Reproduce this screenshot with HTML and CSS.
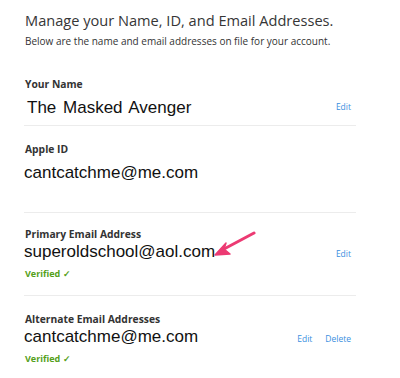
FILE: index.html
```html
<!DOCTYPE html>
<html>
<head>
<meta charset="utf-8">
<link rel="stylesheet" href="styles.css">
</head>
<body>
<div class="page">
  <header class="intro">
    <h1 class="title">Manage your Name, ID, and Email Addresses.</h1>
    <p class="subtitle">Below are the name and email addresses on file for your account.</p>
  </header>

  <section class="field field-name">
    <div class="label">Your Name</div>
    <div class="row">
      <span class="value value-name">The Masked Avenger</span>
      <span class="actions actions-centered"><a class="link">Edit</a></span>
    </div>
  </section>

  <section class="field field-id">
    <div class="label">Apple ID</div>
    <div class="row">
      <span class="value">cantcatchme@me.com</span>
    </div>
  </section>

  <section class="field field-email">
    <div class="label">Primary Email Address</div>
    <div class="row">
      <span class="value">superoldschool@aol.com</span>
      <span class="actions"><a class="link">Edit</a></span>
    </div>
    <div class="verified">Verified ✓</div>
    <svg class="arrow" width="50" height="34" viewBox="0 0 50 34">
      <path d="M44 2 L14 18" stroke="#ec3a73" stroke-width="3" stroke-linecap="round" fill="none"/>
      <path d="M5 24 L16 12 L14 18 L20 23 Z" fill="#ec3a73" stroke="#ec3a73" stroke-width="1.5" stroke-linejoin="round"/>
    </svg>
  </section>

  <section class="field field-email field-last">
    <div class="label">Alternate Email Addresses</div>
    <div class="row">
      <span class="value">cantcatchme@me.com</span>
      <span class="actions"><a class="link">Edit</a><a class="link">Delete</a></span>
    </div>
    <div class="verified verified-last">Verified ✓</div>
  </section>
</div>
</body>
</html>
```

FILE: styles.css
```css
html, body {
  margin: 0;
  padding: 0;
  background: #ffffff;
}

.page {
  width: 332px;
  margin-left: 24px;
  font-family: "Open Sans", "Noto Sans", sans-serif;
  color: #333333;
}

.intro {
  padding-top: 11px;
  padding-bottom: 29px;
}

.title {
  margin: 0;
  font-size: 14.6px;
  line-height: 18px;
  font-weight: normal;
  color: #363636;
  padding-left: 1px;
  white-space: nowrap;
}

.subtitle {
  margin: 6px 0 0 0;
  font-size: 10px;
  line-height: 13px;
  color: #333333;
  padding-left: 1px;
  white-space: nowrap;
}

.field {
  position: relative;
  border-bottom: 1px solid #ececec;
}

.field-name {
  padding-top: 0;
  padding-bottom: 7px;
}

.field-id {
  padding-top: 16px;
  padding-bottom: 29px;
}

.field-email {
  padding-top: 14px;
  padding-bottom: 15px;
}

.field-last {
  padding-top: 16px;
  border-bottom: none;
}

.label {
  font-size: 10.3px;
  line-height: 14px;
  font-weight: bold;
  color: #333333;
  padding-left: 1px;
}

.row {
  display: flex;
  justify-content: space-between;
  align-items: baseline;
  margin-top: 7px;
}

.field-email .row {
  margin-top: 1px;
}

.value {
  font-family: "Liberation Sans", Arial, sans-serif;
  font-size: 17px;
  line-height: 20px;
  color: #111111;
}

.value-name {
  word-spacing: 2px;
  padding-left: 3px;
}

.actions {
  display: flex;
  gap: 13px;
  padding-right: 5px;
}

.actions-centered {
  align-self: center;
  margin-bottom: 4px;
}

.link {
  font-size: 8.5px;
  color: #3b8fe0;
  text-decoration: none;
}

.verified {
  margin-top: 5px;
  font-size: 9px;
  line-height: 13px;
  font-weight: bold;
  color: #55a01a;
  padding-left: 1px;
}

.verified-last {
  margin-top: 5px;
}

.arrow {
  position: absolute;
  left: 186px;
  top: 18px;
}
```
